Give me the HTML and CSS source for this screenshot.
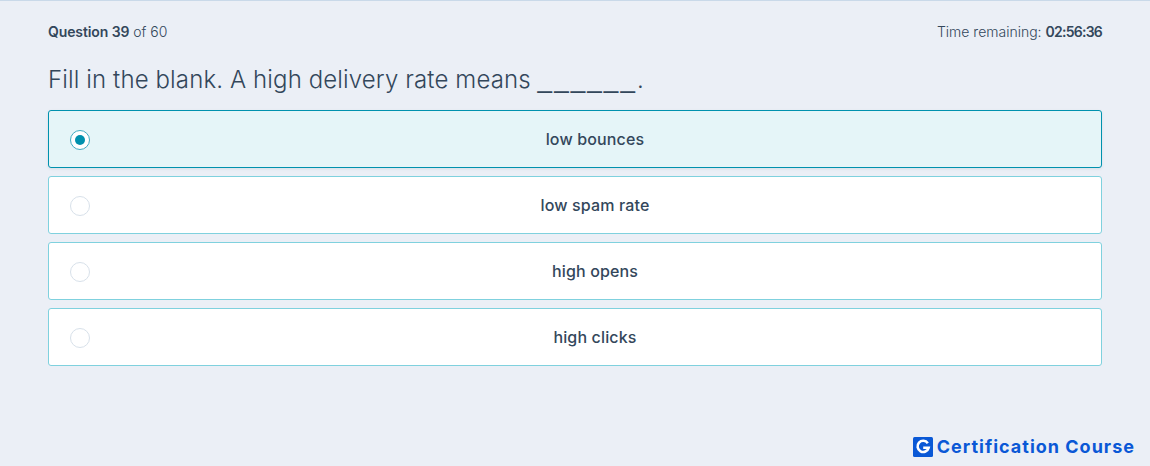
FILE: index.html
```html
<!DOCTYPE html>
<html lang="en">
<head>
<meta charset="utf-8">
<title>Question 39 of 60</title>
<link rel="stylesheet" href="styles.css">
</head>
<body>
<main class="quiz">
  <header class="meta">
    <div><strong>Question 39</strong> of 60</div>
    <div>Time remaining: <strong class="clock">02:56:36</strong></div>
  </header>
  <h1 class="question">Fill in the blank. A high delivery rate means <span class="blank">______</span>.</h1>
  <div class="options">
    <label class="option selected"><span class="radio"></span><span class="text">low bounces</span></label>
    <label class="option"><span class="radio"></span><span class="text">low spam rate</span></label>
    <label class="option"><span class="radio"></span><span class="text">high opens</span></label>
    <label class="option"><span class="radio"></span><span class="text">high clicks</span></label>
  </div>
</main>
<footer class="brand">
  <svg class="logo" width="20" height="20" viewBox="0 0 20 20" aria-hidden="true">
    <rect width="20" height="20" rx="1.5" fill="#0a58d6"/>
    <path d="M14.8 6.2A5.6 5.6 0 1 0 15.6 10.8H10.2" fill="none" stroke="#fff" stroke-width="2.6"/>
  </svg>
  <span>Certification Course</span>
</footer>
</body>
</html>
```
FILE: styles.css
```css
html, body {
  margin: 0;
  height: 466px;
  overflow: hidden;
}
body {
  position: relative;
  box-sizing: border-box;
  background: #ebeff6;
  border-top: 1px solid #c9d9e9;
  color: #33475b;
  font-family: "Inter", "Liberation Sans", sans-serif;
}
.quiz {
  padding: 0 48px;
}
.meta {
  display: flex;
  justify-content: space-between;
  align-items: center;
  height: 20px;
  margin-top: 21px;
  font-size: 14px;
  font-weight: 350;
  line-height: 20px;
}
.meta strong {
  font-weight: 600;
  letter-spacing: -0.1px;
}
.meta .clock {
  letter-spacing: -0.75px;
}
.question {
  height: 36px;
  margin: 20px 0 0;
  font-size: 24px;
  font-weight: 350;
  line-height: 36px;
  letter-spacing: 0.12px;
}
.blank {
  font-family: "Liberation Sans", sans-serif;
  font-size: 26px;
  font-weight: 400;
  line-height: 0;
  letter-spacing: 2.1px;
}
.options {
  display: flex;
  flex-direction: column;
  gap: 8px;
  margin-top: 12px;
}
.option {
  position: relative;
  display: flex;
  align-items: center;
  justify-content: center;
  box-sizing: border-box;
  height: 58px;
  padding-left: 40px;
  background: #fff;
  border: 1px solid #7fd1de;
  border-radius: 3px;
}
.option.selected {
  background: #e5f5f8;
  border-color: #0091ae;
  box-shadow: 0 1px 3px rgba(0, 80, 110, 0.1);
}
.text {
  font-size: 16px;
  font-weight: 500;
  letter-spacing: 0.15px;
}
.radio {
  position: absolute;
  left: 21px;
  top: 19px;
  display: grid;
  place-items: center;
  box-sizing: border-box;
  width: 20px;
  height: 20px;
  border: 1.5px solid #d8e1ea;
  border-radius: 50%;
  background: #fff;
}
.selected .radio {
  border-color: #43acc2;
}
.selected .radio::after {
  content: "";
  width: 10px;
  height: 10px;
  border-radius: 50%;
  background: #0091ae;
}
.brand {
  position: absolute;
  right: 15px;
  bottom: 9px;
  display: flex;
  align-items: center;
  gap: 4px;
  color: #0a58d6;
  font-size: 18px;
  font-weight: 700;
  line-height: 20px;
  letter-spacing: 1px;
}
```
